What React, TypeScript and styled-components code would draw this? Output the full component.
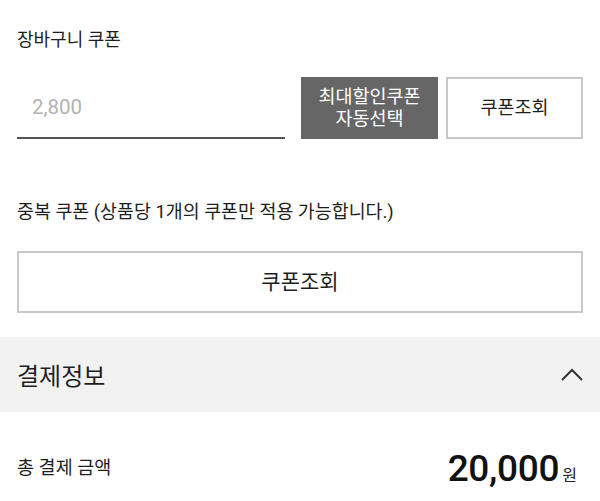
import styled, { createGlobalStyle } from 'styled-components';

const GlobalStyle = createGlobalStyle`
  body {
    margin: 0;
    background: #fff;
    font-family: Roboto, "Noto Sans CJK KR", sans-serif;
    color: #222;
  }
`;

const Page = styled.div`
  width: 600px;
`;

const Section = styled.div`
  padding: 28px 17px 0;
`;

const Label = styled.div<{ $size?: number }>`
  font-size: ${(p) => p.$size ?? 18}px;
  line-height: 24px;
  color: #1e1e1e;
`;

const CouponRow = styled.div`
  display: flex;
  margin-top: 25px;
  height: 62px;
`;

const AmountInput = styled.input`
  flex: 1;
  min-width: 0;
  margin-right: 16px;
  border: none;
  border-bottom: 2px solid #555;
  padding: 0 0 0 15px;
  font-family: Roboto, sans-serif;
  font-size: 20.5px;
  color: #333;
  outline: none;
  background: transparent;

  &::placeholder {
    color: #b3b3b3;
  }
`;

const Button = styled.button<{ $dark?: boolean; $wide?: boolean }>`
  box-sizing: border-box;
  width: ${(p) => (p.$wide ? '100%' : '137px')};
  height: 62px;
  border: ${(p) => (p.$dark ? 'none' : '2px solid #c8c8c8')};
  background: ${(p) => (p.$dark ? '#666' : '#fff')};
  color: ${(p) => (p.$dark ? '#fff' : '#1e1e1e')};
  font-family: Roboto, "Noto Sans CJK KR", sans-serif;
  font-size: ${(p) => (p.$wide ? '21px' : '18.5px')};
  line-height: 22px;
  padding: 0;
  cursor: pointer;

  & + & {
    margin-left: 8px;
  }
`;

const DupLabel = styled(Label)`
  margin-top: 61px;
`;

const WideWrap = styled.div`
  margin-top: 27px;
`;

const InfoHeader = styled.div`
  margin-top: 24px;
  height: 75px;
  background: #f2f2f2;
  display: flex;
  align-items: center;
  justify-content: space-between;
  padding: 0 17px;
`;

const InfoTitle = styled.div`
  font-size: 24px;
  color: #1e1e1e;
`;

const TotalRow = styled.div`
  display: flex;
  align-items: center;
  justify-content: space-between;
  height: 40px;
  margin-top: 36px;
  padding: 0 17px;
`;

const Price = styled.div`
  display: flex;
  align-items: baseline;
  padding-right: 6px;
`;

const PriceNum = styled.span`
  font-size: 37px;
  font-weight: 500;
  color: #111;
  letter-spacing: -0.3px;
`;

const Won = styled.span`
  font-size: 16px;
  color: #222;
  margin-left: 3px;
`;

export default function App() {
  return (
    <Page>
      <GlobalStyle />
      <Section>
        <Label>장바구니 쿠폰</Label>
        <CouponRow>
          <AmountInput placeholder="2,800" />
          <Button $dark>
            최대할인쿠폰
            <br />
            자동선택
          </Button>
          <Button>쿠폰조회</Button>
        </CouponRow>
        <DupLabel $size={18.4}>중복 쿠폰 (상품당 1개의 쿠폰만 적용 가능합니다.)</DupLabel>
        <WideWrap>
          <Button $wide>쿠폰조회</Button>
        </WideWrap>
      </Section>
      <InfoHeader>
        <InfoTitle>결제정보</InfoTitle>
        <svg width="22" height="13" viewBox="0 0 22 13">
          <polyline points="1,12 11,2 21,12" fill="none" stroke="#333" strokeWidth="2" />
        </svg>
      </InfoHeader>
      <TotalRow>
        <Label $size={18.5}>총 결제 금액</Label>
        <Price>
          <PriceNum>20,000</PriceNum>
          <Won>원</Won>
        </Price>
      </TotalRow>
    </Page>
  );
}
